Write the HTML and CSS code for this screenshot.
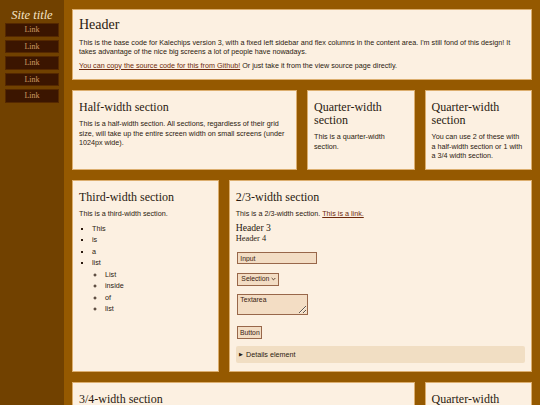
FILE: index.html
```html
<!DOCTYPE html>
<html lang="en">
<head>
<meta charset="utf-8">
<title>Kalechips v3</title>
<link rel="stylesheet" href="styles.css">
</head>
<body>
<aside class="sidebar">
  <div class="site-title">Site title</div>
  <nav class="nav">
    <a class="nav-link" href="#">Link</a>
    <a class="nav-link" href="#">Link</a>
    <a class="nav-link" href="#">Link</a>
    <a class="nav-link" href="#">Link</a>
    <a class="nav-link" href="#">Link</a>
  </nav>
</aside>
<main class="content">
  <section class="card full">
    <h1>Header</h1>
    <p>This is the base code for Kalechips version 3, with a fixed left sidebar and flex columns in the content area. I'm still fond of this design! It takes advantage of the nice big screens a lot of people have nowadays.</p>
    <p><a href="#">You can copy the source code for this from Github!</a> Or just take it from the view source page directly.</p>
  </section>
  <section class="card half">
    <h2>Half-width section</h2>
    <p>This is a half-width section. All sections, regardless of their grid size, will take up the entire screen width on small screens (under 1024px wide).</p>
  </section>
  <section class="card quarter">
    <h2>Quarter-width section</h2>
    <p>This is a quarter-width section.</p>
  </section>
  <section class="card quarter">
    <h2>Quarter-width section</h2>
    <p>You can use 2 of these with a half-width section or 1 with a 3/4 width section.</p>
  </section>
  <section class="card third">
    <h2>Third-width section</h2>
    <p>This is a third-width section.</p>
    <ul class="list">
      <li>This</li>
      <li>is</li>
      <li>a</li>
      <li>list
        <ul class="sublist">
          <li>List</li>
          <li>inside</li>
          <li>of</li>
          <li>list</li>
        </ul>
      </li>
    </ul>
  </section>
  <section class="card two-thirds">
    <h2>2/3-width section</h2>
    <p>This is a 2/3-width section. <a href="#">This is a link.</a></p>
    <h3>Header 3</h3>
    <h4>Header 4</h4>
    <form class="form">
      <input class="field input" type="text" placeholder="Input">
      <span class="select-wrap">
        <select class="field select"><option>Selection</option></select>
        <svg class="chev" viewBox="0 0 6 4" width="5" height="4"><path d="M0.8 0.8 L3 3 L5.2 0.8" fill="none" stroke="#3a2010" stroke-width="1"/></svg>
      </span>
      <textarea class="field textarea" placeholder="Textarea"></textarea>
      <button class="field button" type="button">Button</button>
    </form>
    <details class="details">
      <summary>Details element</summary>
      <p>Hidden content.</p>
    </details>
  </section>
  <section class="card three-quarters">
    <h2>3/4-width section</h2>
    <p>This is a three-quarter-width section.</p>
  </section>
  <section class="card quarter">
    <h2>Quarter-width section</h2>
    <p>This is a quarter-width section.</p>
  </section>
</main>
</body>
</html>
```
FILE: styles.css
```css
html, body {
  margin: 0;
  padding: 0;
  height: 100%;
}
body {
  display: flex;
  overflow: hidden;
  font-family: "Liberation Sans", Arial, sans-serif;
  font-size: 7.2px;
  line-height: 9.4px;
  color: #2b1a0e;
  background: #955900;
}
.sidebar {
  width: 64px;
  flex: none;
  background: #714100;
  display: flex;
  flex-direction: column;
  align-items: stretch;
}
.site-title {
  font-family: "Liberation Serif", "Times New Roman", serif;
  font-style: italic;
  font-size: 12.5px;
  line-height: 14px;
  color: #f6e4c6;
  text-align: center;
  padding-top: 8px;
}
.nav {
  display: flex;
  flex-direction: column;
  gap: 3px;
  padding: 1px 5px 0 5px;
}
.nav-link {
  display: block;
  height: 13.5px;
  box-sizing: border-box;
  border: 1px solid #552800;
  background: #3b1500;
  color: #cf9a62;
  font-family: "Liberation Serif", "Times New Roman", serif;
  font-size: 8px;
  line-height: 11.5px;
  text-align: center;
  text-decoration: none;
}
.content {
  flex: 1;
  display: flex;
  flex-wrap: wrap;
  align-content: flex-start;
  padding: 4px 3px;
  background: #955900;
}
.card {
  box-sizing: border-box;
  margin: 5px;
  padding: 6.5px 6px 5px 6px;
  border: 1px solid #dcae6e;
  background: #fcf0e1;
}
.full { width: calc(100% - 10px); }
.half { width: calc(50% - 10px); }
.quarter { width: calc(25% - 10px); }
.third { width: calc(33.333% - 10px); }
.two-thirds { width: calc(66.667% - 10px); }
.three-quarters { width: calc(75% - 10px); }

h1, h2, h3, h4 {
  font-family: "Liberation Serif", "Times New Roman", serif;
  font-weight: normal;
  color: #2a1a10;
}
h1 {
  font-size: 14px;
  line-height: 16px;
  margin: 0.5px 0 5px 0;
}
h2 {
  font-size: 12px;
  line-height: 13px;
  margin: 3.5px 0 5px 0;
}
h3 {
  font-size: 9.7px;
  line-height: 10px;
  margin: 4px 0 0 0;
}
h4 {
  font-size: 8.4px;
  line-height: 10px;
  margin: 1.5px 0 0 0;
}
p {
  margin: 0 0 4px 0;
}
a {
  color: #6e2a0c;
}
.list {
  margin: 4px 0 0 0;
  padding-left: 13px;
  list-style: square;
}
.list li {
  line-height: 11.5px;
}
.sublist {
  margin: 0;
  padding-left: 13px;
  list-style: circle;
}
.form {
  display: flex;
  flex-direction: column;
  align-items: flex-start;
  gap: 8.5px;
  margin: 7.5px 0 0 1.7px;
}
.field {
  box-sizing: border-box;
  font-family: "Liberation Sans", Arial, sans-serif;
  font-size: 6.8px;
  color: #3a2010;
  background: #f3ddc4;
  border: 1px solid #98674a;
  border-radius: 0;
  margin: 0;
}
.field::placeholder {
  color: #3a2010;
  opacity: 1;
}
.input {
  width: 80px;
  height: 12.5px;
  padding: 0 2px;
}
.select-wrap {
  position: relative;
  display: inline-block;
}
.select {
  -webkit-appearance: none;
  appearance: none;
  width: 42px;
  height: 12.7px;
  padding: 0 0 0 3px;
  line-height: 10px;
}
.chev {
  position: absolute;
  right: 3.5px;
  top: 4.5px;
}
.textarea {
  width: 71px;
  height: 20.5px;
  padding: 1px 2px;
  resize: both;
  display: block;
}
.button {
  height: 13px;
  width: 25px;
  padding: 0;
  margin-top: 3px;
}
.details {
  margin-top: 6.5px;
  margin-bottom: 2.5px;
  background: #f1dec3;
  border-radius: 2px;
  padding: 4px 3px;
  line-height: 9.5px;
}
.details summary {
  list-style: none;
  cursor: pointer;
}
.details summary::-webkit-details-marker {
  display: none;
}
.details summary::before {
  content: "\25B6";
  font-size: 5px;
  display: inline-block;
  width: 7.3px;
  vertical-align: 1px;
}
```
